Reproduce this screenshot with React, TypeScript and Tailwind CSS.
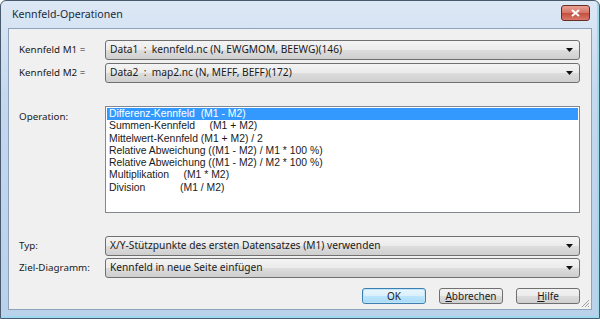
import React from "react";

const font = { fontFamily: '"Noto Sans", "Open Sans", sans-serif' };

const Combo = ({ text }: { text: string }) => (
  <div className="relative flex h-[20px] flex-1 items-center rounded-[3px] border border-[#707070] bg-[linear-gradient(to_bottom,#f4f4f4_0%,#ebebeb_50%,#dddddd_50%,#cfcfcf_100%)] pl-[4px] text-[10.2px] text-[#1a1a1a]">
    <span className="whitespace-pre">{text}</span>
    <svg className="absolute right-[6px] top-[7px]" width="7" height="4" viewBox="0 0 7 4">
      <path d="M0 0h7L3.5 4z" fill="#111" />
    </svg>
  </div>
);

const Row = ({ label, text }: { label: string; text: string }) => (
  <div className="flex items-center">
    <div className="w-[86px] text-[9.8px] text-[#1a1a1a]">{label}</div>
    <Combo text={text} />
  </div>
);

const ops = [
  "Differenz-Kennfeld  (M1 - M2)",
  "Summen-Kennfeld     (M1 + M2)",
  "Mittelwert-Kennfeld (M1 + M2) / 2",
  "Relative Abweichung ((M1 - M2) / M1 * 100 %)",
  "Relative Abweichung ((M1 - M2) / M2 * 100 %)",
  "Multiplikation     (M1 * M2)",
  "Division            (M1 / M2)",
];

const Button = ({
  children,
  primary,
}: {
  children: React.ReactNode;
  primary?: boolean;
}) => (
  <div
    className={`flex h-[16px] w-[64px] items-center justify-center rounded-[3px] border text-[10px] text-[#1a1a1a] ${
      primary
        ? "border-[#3c7fb1] bg-[linear-gradient(to_bottom,#eaf6fd_0%,#d9f0fc_50%,#bee6fd_50%,#a7d9f5_100%)] shadow-[inset_0_0_0_1px_#bfe3f7]"
        : "border-[#707070] bg-[linear-gradient(to_bottom,#f2f2f2_0%,#ebebeb_50%,#dddddd_50%,#cfcfcf_100%)]"
    }`}
  >
    {children}
  </div>
);

export default function App() {
  return (
    <div className="h-[319px] w-[600px] bg-white" style={font}>
      <div className="flex h-full w-full flex-col rounded-t-[6px] border border-[#4a5a6e] bg-[linear-gradient(to_bottom,#dde8f5_0%,#c4d8ee_30%,#b9d1ea_100%)] px-[7px] pb-[8px] shadow-[inset_-2px_-2px_0_#9fd9ee]">
        <div className="flex h-[27px] items-center justify-between pl-[4px]">
          <span className="text-[10.6px] text-[#1b2a3c]">Kennfeld-Operationen</span>
          <div className="mr-[2px] mt-[-3px] flex h-[16px] w-[29px] items-center justify-center rounded-[3px] border border-[#6b2c28] bg-[linear-gradient(to_bottom,#e8a195_0%,#d47465_50%,#c24e3c_50%,#d9786b_100%)]">
            <svg width="9" height="8" viewBox="0 0 9 8">
              <path d="M1 1l7 6M8 1L1 7" stroke="#ffffff" strokeWidth="2" />
            </svg>
          </div>
        </div>
        <div className="relative flex flex-1 flex-col border border-[#8da2bd] bg-[#f0f0f0] pl-[10px] pr-[11px] pt-[11px]">
          <div className="flex flex-col gap-[3px]">
            <Row label="Kennfeld M1 =" text="Data1  :  kennfeld.nc (N, EWGMOM, BEEWG)(146)" />
            <Row label="Kennfeld M2 =" text="Data2  :  map2.nc (N, MEFF, BEFF)(172)" />
          </div>
          <div className="mt-[23px] flex">
            <div className="w-[86px] pt-[4px] text-[9.8px] text-[#1a1a1a]">Operation:</div>
            <div
              className="h-[107px] flex-1 border border-[#828790] bg-white px-[1px] pt-[1px]"
              style={{ fontFamily: '"Liberation Sans", Arial, sans-serif' }}
            >
              {ops.map((o, i) => (
                <div
                  key={i}
                  className={`h-[12.3px] whitespace-pre pl-[2px] text-[10.4px] leading-[12px] ${
                    i === 0 ? "bg-[#3399ff] text-white" : "text-[#1a1a1a]"
                  }`}
                >
                  {o}
                </div>
              ))}
            </div>
          </div>
          <div className="mt-[23px] flex flex-col gap-[2px]">
            <Row label="Typ:" text="X/Y-Stützpunkte des ersten Datensatzes (M1) verwenden" />
            <Row label="Ziel-Diagramm:" text="Kennfeld in neue Seite einfügen" />
          </div>
          <div className="mt-[10px] flex justify-end gap-[13px]">
            <Button primary>OK</Button>
            <Button>
              <span>
                <span className="underline">A</span>bbrechen
              </span>
            </Button>
            <Button>
              <span>
                <span className="underline">H</span>ilfe
              </span>
            </Button>
          </div>
          <svg className="absolute bottom-[1px] right-[1px]" width="10" height="10" viewBox="0 0 10 10">
            <path d="M9 2L2 9M9 5L5 9M9 8L8 9" stroke="#a0a0a0" strokeWidth="1" />
          </svg>
        </div>
      </div>
    </div>
  );
}
